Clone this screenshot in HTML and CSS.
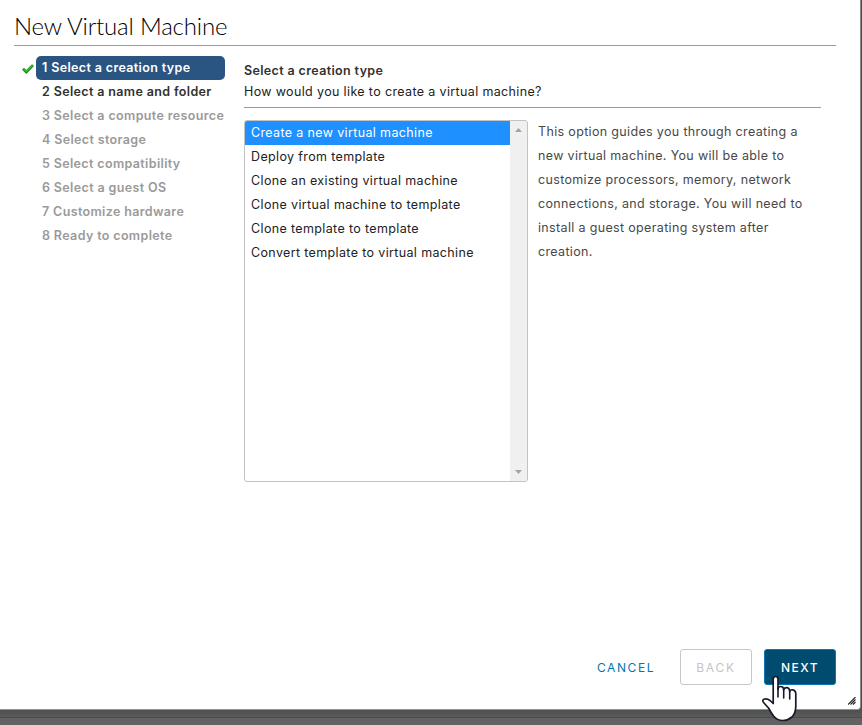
FILE: index.html
```html
<!DOCTYPE html>
<html lang="en">
<head>
<meta charset="utf-8">
<title>New Virtual Machine</title>
<link rel="stylesheet" href="styles.css">
</head>
<body>
<main class="dialog">
  <h1 class="title"><span>New Virtual Machine</span></h1>
  <div class="content">
    <ol class="steps">
      <li class="current"><svg class="check" width="12" height="11" viewBox="0 0 12 11"><path d="M1 5.8 4.3 9 11 2.1" fill="none" stroke="#168a14" stroke-width="2.7"/><path d="M1.3 5.6 4.3 8.4 10.7 2" fill="none" stroke="#35b52b" stroke-width="1.5"/></svg><span>1 Select a creation type</span></li>
      <li class="ready"><span>2 Select a name and folder</span></li>
      <li><span>3 Select a compute resource</span></li>
      <li><span>4 Select storage</span></li>
      <li><span>5 Select compatibility</span></li>
      <li><span>6 Select a guest OS</span></li>
      <li><span>7 Customize hardware</span></li>
      <li><span>8 Ready to complete</span></li>
    </ol>
    <section class="page">
      <header class="intro">
        <h2>Select a creation type</h2>
        <p>How would you like to create a virtual machine?</p>
      </header>
      <div class="choice">
        <div class="listbox">
          <ul>
            <li class="selected"><span>Create a new virtual machine</span></li>
            <li><span>Deploy from template</span></li>
            <li><span>Clone an existing virtual machine</span></li>
            <li><span>Clone virtual machine to template</span></li>
            <li><span>Clone template to template</span></li>
            <li><span>Convert template to virtual machine</span></li>
          </ul>
          <div class="scrollbar">
            <svg width="7" height="4" viewBox="0 0 7 4"><path d="M0 4 3.5 0 7 4Z" fill="#a3a3a3"/></svg>
            <svg width="7" height="4" viewBox="0 0 7 4"><path d="M0 0 3.5 4 7 0Z" fill="#a3a3a3"/></svg>
          </div>
        </div>
        <p class="description">This option guides you through creating a<br>new virtual machine. You will be able to<br>customize processors, memory, network<br>connections, and storage. You will need to<br>install a guest operating system after<br>creation.</p>
      </div>
    </section>
  </div>
  <footer class="actions">
    <button class="cancel">CANCEL</button>
    <button class="back" disabled>BACK</button>
    <button class="next">NEXT</button>
  </footer>
  <svg class="grip" width="8" height="8" viewBox="0 0 8 8"><path d="M0 7.5 7.5 0M2.5 7.5 7.5 2.5M5 7.5 7.5 5" stroke="#222" stroke-width="1.1"/></svg>
</main>
<svg class="cursor" width="36" height="47" viewBox="0 0 36 47"><path d="M11.2 27V4.2Q11.2 1.5 13.6 1.5Q16 1.5 16 4.2V14.5Q16 11.5 18.5 11.5Q21.7 11.5 21.7 15Q22 12.7 24.5 12.7Q27.5 12.7 27.7 16.5Q28.3 14.5 30.5 14.8Q33.8 15.2 33.8 19V31Q33.8 38 30 42Q26 45.5 21 45.5Q15 45.5 11.5 41Q9 37.5 6.5 33L2 28Q-.5 25.2 2 24.2Q5 23.2 8 25.5L11.2 28.5Z" fill="#fff" stroke="#17192b" stroke-width="1.7" stroke-linejoin="round"/><path d="M16 13V22M21.7 14V23M27.7 16V24" stroke="#17192b" stroke-width="1.6" stroke-linecap="round"/></svg>
</body>
</html>
```
FILE: styles.css
```css
* { box-sizing: border-box; }
body {
  margin: 0;
  height: 725px;
  overflow: hidden;
  background: linear-gradient(#4d4f4e 709px, #595a5a 717px, #4b4c4c 717px, #4b4c4c 718px, #626262 718px);
  font: 12.5px/24px Inter, "Liberation Sans", sans-serif;
  letter-spacing: .36px;
  color: #222;
}
h1, h2, p, ul, ol { margin: 0; padding: 0; list-style: none; }
.dialog {
  position: relative;
  display: flex;
  flex-direction: column;
  width: 861px;
  height: 710px;
  padding: 0 24px 24px 14px;
  background: #fff;
  border-right: 1px solid #858585;
  border-bottom: 1px solid #929493;
  border-bottom-right-radius: 4px;
}
.title {
  height: 46px;
  padding-top: 14px;
  border-bottom: 1px solid #9b9b9b;
  font-family: Lato, Inter, sans-serif;
  font-size: 24px;
  font-weight: 300;
  letter-spacing: -.18px;
  line-height: 23px;
  color: #000;
  white-space: nowrap;
}
.content { display: flex; flex: 1; padding-top: 10px; }
.steps {
  width: 211px;
  margin-right: 19px;
  padding-left: 22px;
  font-weight: 600;
  color: #9a9a9a;
  white-space: nowrap;
}
.steps li { position: relative; height: 24px; padding-left: 6px; line-height: 23px; }
.steps .current { background: #2a5482; border-radius: 5px; color: #fff; }
.steps .ready { color: #313131; }
.check { position: absolute; left: -14px; top: 7px; }
.page { width: 577px; }
.intro { height: 52px; padding-top: 4px; border-bottom: 1px solid #999; line-height: 21px; }
.intro h2 { font-size: 12.5px; font-weight: 600; line-height: 21px; color: #313131; }
.choice { display: flex; gap: 10px; padding-top: 12px; }
.listbox {
  display: flex;
  width: 284px;
  height: 362px;
  border: 1px solid #c3c3c3;
  border-radius: 3px;
  overflow: hidden;
}
.listbox ul { flex: 1; white-space: nowrap; }
.listbox li { height: 24px; padding-left: 6px; line-height: 23px; }
.listbox .selected { background: #1e90ff; color: #fff; }
.scrollbar {
  display: flex;
  flex-direction: column;
  justify-content: space-between;
  align-items: center;
  width: 17px;
  padding: 7px 0;
  background: #f0f0f0;
}
.description { color: #484848; letter-spacing: .34px; white-space: nowrap; }
.actions { display: flex; gap: 12px; height: 36px; justify-content: flex-end; }
button {
  width: 72px;
  height: 36px;
  padding: 1px 0 0;
  border: 1px solid #c7c7c7;
  border-radius: 3px;
  background: #fff;
  font: 500 12px/34px Inter, "Liberation Sans", sans-serif;
  letter-spacing: 1.45px;
  text-align: center;
}
.cancel { width: 84px; border-color: transparent; color: #0874b4; font-weight: 400; letter-spacing: 1.6px; }
.back { color: #c4c4c4; font-weight: 400; letter-spacing: 1.8px; }
.next { background: #004b70; border-color: #0878b5; color: #fff; }
.grip { position: absolute; right: 4px; bottom: 4px; }
.cursor { position: absolute; left: 762px; top: 675px; }
```
